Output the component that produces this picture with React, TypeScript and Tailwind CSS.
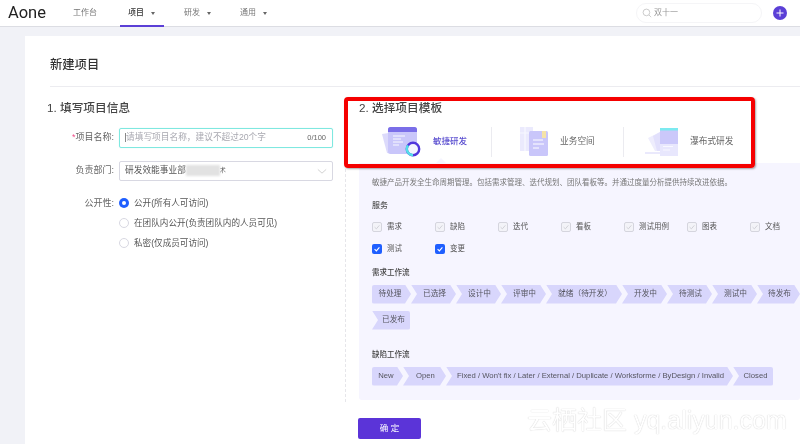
import React from "react";

const font = { fontFamily: '"Liberation Sans","Noto Sans CJK SC",sans-serif' };

function Caret() {
  return <span className="ml-[7px] inline-block h-0 w-0 border-x-[2.5px] border-t-[3px] border-x-transparent border-t-[#666]" />;
}

function Check({ on }: { on?: boolean }) {
  return (
    <span className={on ? "flex h-[10px] w-[10px] items-center justify-center rounded-[2px] bg-[#1f5fff]" : "flex h-[10px] w-[10px] items-center justify-center rounded-[2px] border border-[#d5d5de] bg-[#f3f3f8]"}>
      <svg viewBox="0 0 10 10" className="h-[8px] w-[8px]">
        <path d="M2 5.2 L4.2 7.3 L8 2.9" fill="none" stroke={on ? "#fff" : "#c4c4cc"} strokeWidth={on ? 1.4 : 0.9} />
      </svg>
    </span>
  );
}

function Service({ label, on }: { label: string; on?: boolean }) {
  return (
    <div className="flex items-center gap-[5px] text-[7.5px] text-[#555]">
      <Check on={on} />
      <span>{label}</span>
    </div>
  );
}

function Step({ label, w, first, last }: { label: string; w: number; first?: boolean; last?: boolean }) {
  const clip = first
    ? "[clip-path:polygon(0_0,calc(100%-6px)_0,100%_50%,calc(100%-6px)_100%,0_100%)]"
    : last
    ? "[clip-path:polygon(0_0,100%_0,100%_100%,0_100%,6px_50%)]"
    : "[clip-path:polygon(0_0,calc(100%-6px)_0,100%_50%,calc(100%-6px)_100%,0_100%,6px_50%)]";
  return (
    <div style={{ width: w }} className={`${clip} flex h-[19px] items-center justify-center bg-[#d8d6fc] text-[7.7px] whitespace-nowrap text-[#55555f] ${first ? "rounded-l-[2px] pr-[3px]" : last ? "rounded-r-[2px] pl-[5px]" : "pl-[2px]"}`}>
      {label}
    </div>
  );
}

function Radio({ on, label }: { on?: boolean; label: string }) {
  return (
    <div className="flex h-[20px] items-center gap-[5px] text-[8.6px] text-[#555]">
      {on ? (
        <span className="flex h-[10px] w-[10px] items-center justify-center rounded-full bg-[#1f5fff]">
          <span className="h-[4px] w-[4px] rounded-full bg-white" />
        </span>
      ) : (
        <span className="h-[10px] w-[10px] rounded-full border border-[#d8d8e2] bg-white" />
      )}
      <span>{label}</span>
    </div>
  );
}

function AgileIcon() {
  return (
    <svg viewBox="0 0 40 32" className="h-[32px] w-[40px]">
      <path d="M1 8 L14 6 L14 28 L6 27 Z" fill="#dcdafb" />
      <rect x="7" y="1" width="29" height="27" rx="2.5" fill="#c9c6fa" />
      <path d="M7 6 V3.5 A2.5 2.5 0 0 1 9.5 1 H33.5 A2.5 2.5 0 0 1 36 3.5 V6 Z" fill="#7a6ee8" />
      <path d="M12 10 H24 M12 13 H20 M12 16 H22 M12 19 H18" stroke="#fff" strokeWidth="0.9" />
      <circle cx="32" cy="23" r="6.2" fill="#f4f4ff" stroke="#5036dc" strokeWidth="2.4" />
      <path d="M32 29.2 A6.2 6.2 0 0 1 27 19.4" fill="none" stroke="#53dfe8" strokeWidth="2.4" />
    </svg>
  );
}

function SpaceIcon() {
  return (
    <svg viewBox="0 0 32 32" className="h-[32px] w-[32px]">
      <rect x="1" y="1" width="13" height="24" fill="#ebeafd" />
      <path d="M6 1 V25 M1 7 H14" stroke="#f8f8ff" strokeWidth="1.2" />
      <rect x="10" y="5" width="19" height="25" rx="1.5" fill="#c9c6fa" />
      <rect x="23" y="5" width="4" height="7" fill="#f5e3a8" />
      <path d="M14 14 H24 M14 18 H25 M14 22 H20" stroke="#fff" strokeWidth="1" />
    </svg>
  );
}

function WaterfallIcon() {
  return (
    <svg viewBox="0 0 34 30" className="h-[30px] w-[34px]">
      <path d="M3 11 L15 5 L15 24 L10 24 Z" fill="#eeedfd" />
      <path d="M8 9 L15 5 L15 24 L12 24 Z" fill="#e2e0fc" />
      <path d="M0 26 H18" stroke="#dcdafb" strokeWidth="1.2" />
      <rect x="15" y="1" width="18" height="28" fill="#e8e7fd" />
      <rect x="15" y="1" width="18" height="16" fill="#cbc8fa" />
      <rect x="15" y="1" width="18" height="2.5" fill="#7ceaf0" />
      <path d="M18 19.5 H28 M18 23 H25" stroke="#f8f8ff" strokeWidth="1" />
    </svg>
  );
}

export default function App() {
  return (
    <div style={font} className="relative h-[444px] w-[800px] overflow-hidden bg-[#f1f2f7] [filter:blur(0.3px)]">
      <header className="flex h-[27px] items-center justify-between border-b border-[#dcdde3] bg-white pr-[13px]">
        <div className="flex h-full items-center">
          <span className="ml-[8px] w-[65px] font-['Roboto'] text-[16.5px] font-normal text-[#222]">Aone</span>
          <span className="w-[47px] text-[8px] text-[#777]">工作台</span>
          <span className="relative flex h-full w-[64px] items-center pl-[8px] text-[8px] font-medium text-[#333]">
            项目<Caret />
            <span className="absolute bottom-[-1px] left-0 h-[2px] w-[44px] bg-[#5b3fd6]" />
          </span>
          <span className="flex w-[56px] items-center text-[8px] text-[#777]">研发<Caret /></span>
          <span className="flex items-center text-[8px] text-[#777]">通用<Caret /></span>
        </div>
        <div className="flex items-center gap-[11px]">
          <div className="flex h-[20px] w-[126px] items-center gap-[2px] rounded-full border border-[#f5f5f7] pl-[5px] text-[8px] text-[#999]">
            <svg viewBox="0 0 12 12" className="h-[10px] w-[10px]"><circle cx="5.3" cy="5.3" r="4" fill="none" stroke="#bbb" strokeWidth="0.9" /><path d="M8.3 8.3 L11 11" stroke="#bbb" strokeWidth="0.9" /></svg>
            <span>双十一</span>
          </div>
          <span className="flex h-[14px] w-[14px] items-center justify-center rounded-full bg-[#5b3fd6]">
            <svg viewBox="0 0 10 10" className="h-[10px] w-[10px]"><path d="M5 1.5 V8.5 M1.5 5 H8.5" stroke="#fff" strokeWidth="1" /></svg>
          </span>
        </div>
      </header>

      <main className="mt-[9px] ml-[25px] h-[408px] bg-white pt-[20px]">
        <div className="ml-[25px] border-b border-[#ececf0] pb-[12px] text-[12.3px] leading-[18px] font-medium text-[#333]">新建项目</div>

        <div className="flex pt-[12px]">
          <section className="h-[303px] w-[321px] shrink-0 border-r border-dashed border-[#e6e6ea] pl-[22px]">
            <h2 className="text-[11.7px] leading-[18px] font-medium text-[#444]">1. 填写项目信息</h2>
            <div className="mt-[11px] flex items-center text-[9px] text-[#666]">
              <label className="w-[72px] pr-[5px] text-right"><span className="text-[#f0508a]">*</span>项目名称:</label>
              <div className="flex h-[20px] w-[214px] items-center justify-between rounded-[2px] border border-[#7fe8e0] pr-[6px] pl-[5px] shadow-[0_0_1px_#a8f0ea]">
                <span className="flex items-center text-[8.7px] text-[#a8a8b0]"><span className="h-[9px] w-[1px] bg-[#888]" />请填写项目名称，建议不超过20个字</span>
                <span className="text-[7.5px] text-[#666]">0/100</span>
              </div>
            </div>
            <div className="mt-[13px] flex items-center text-[9px] text-[#666]">
              <label className="w-[72px] pr-[5px] text-right">负责部门:</label>
              <div className="flex h-[20px] w-[214px] items-center justify-between rounded-[2px] border border-[#d8d8e2] pr-[5px] pl-[5px]">
                <span className="flex items-center text-[8.7px] text-[#555]">研发效能事业部
                  <span className="h-[11px] w-[34px] bg-[#e2e2e2] blur-[1px]" />
                  <span className="text-[6px]">术</span>
                </span>
                <svg viewBox="0 0 12 8" className="h-[7px] w-[10px]"><path d="M1 1.5 L6 6 L11 1.5" fill="none" stroke="#bbb" strokeWidth="0.8" /></svg>
              </div>
            </div>
            <div className="mt-[12px] flex">
              <label className="w-[72px] pt-[4px] pr-[5px] text-right text-[9px] text-[#666]">公开性:</label>
              <div>
                <Radio on label="公开(所有人可访问)" />
                <Radio label="在团队内公开(负责团队内的人员可见)" />
                <Radio label="私密(仅成员可访问)" />
              </div>
            </div>
          </section>

          <section className="min-w-0 flex-1 pl-[13px]">
            <h2 className="text-[11.7px] leading-[18px] font-medium text-[#444]">2. 选择项目模板</h2>
            <div className="flex h-[42px] items-center pt-[7px]">
              <div className="flex h-[30px] w-[133px] items-center border-r border-[#ebebf0] pl-[22px]">
                <AgileIcon />
                <span className="ml-[12px] text-[8.5px] font-medium text-[#5b4fd0]">敏捷研发</span>
              </div>
              <div className="flex h-[30px] w-[132px] items-center border-r border-[#ebebf0] pl-[27px]">
                <SpaceIcon />
                <span className="ml-[9px] text-[8.7px] text-[#666]">业务空间</span>
              </div>
              <div className="flex h-[30px] items-center pl-[21px]">
                <WaterfallIcon />
                <span className="ml-[11px] text-[8.7px] text-[#666]">瀑布式研发</span>
              </div>
            </div>
            <div className="mt-[4px] h-[237px] rounded-b-[3px] bg-[#f6f5ff] pt-[15px] pl-[13px]">
              <p className="text-[7.5px] leading-[10px] text-[#777]">敏捷产品开发全生命周期管理。包括需求管理、迭代规划、团队看板等。并通过度量分析提供持续改进依据。</p>
              <h3 className="mt-[13px] text-[8px] leading-[10px] font-medium text-[#555]">服务</h3>
              <div className="mt-[10px] grid grid-cols-[repeat(7,63px)] gap-y-[11px]">
                <Service label="需求" />
                <Service label="缺陷" />
                <Service label="迭代" />
                <Service label="看板" />
                <Service label="测试用例" />
                <Service label="图表" />
                <Service label="文档" />
                <Service label="测试" on />
                <Service label="变更" on />
              </div>
              <h3 className="mt-[13px] text-[7.5px] leading-[10px] font-medium text-[#444]">需求工作流</h3>
              <div className="mt-[7px] flex flex-wrap gap-y-[7px]">
                <Step first label="待处理" w={39} />
                <Step label="已选择" w={45} />
                <Step label="设计中" w={45} />
                <Step label="评审中" w={45} />
                <Step label="就绪（待开发）" w={76} />
                <Step label="开发中" w={45} />
                <Step label="待测试" w={45} />
                <Step label="测试中" w={45} />
                <Step label="待发布" w={43} />
                <Step last label="已发布" w={38} />
              </div>
              <h3 className="mt-[20px] text-[7.5px] leading-[10px] font-medium text-[#444]">缺陷工作流</h3>
              <div className="mt-[7px] flex">
                <Step first label="New" w={31} />
                <Step label="Open" w={43} />
                <Step label="Fixed / Won't fix / Later / External / Duplicate / Worksforme / ByDesign / Invalid" w={287} />
                <Step last label="Closed" w={40} />
              </div>
            </div>
            <button className="mt-[18px] -ml-[1px] flex h-[21px] w-[63px] items-center justify-center rounded-[2px] bg-[#5b34d8] text-[8.5px] text-white">确 定</button>
          </section>
        </div>
      </main>

      <div className="absolute top-[97px] left-[344px] h-[71px] w-[411px] rounded-[4px] border-[4px] border-[#f50000] shadow-[1px_1px_2px_rgba(0,0,0,0.35)]" />
      <div className="absolute top-[158px] left-[436px] h-0 w-0 border-x-[5px] border-b-[5px] border-x-transparent border-b-[#f6f5ff]" />
      <div className="absolute top-[405px] left-[527px] whitespace-nowrap text-[25px] leading-[30px] text-white [text-shadow:0_0_1px_#bbb]">云栖社区 yq.aliyun.com</div>
    </div>
  );
}
